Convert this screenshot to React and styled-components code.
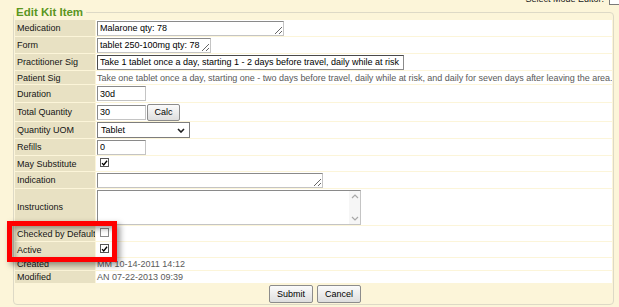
import React from 'react';
import styled, { createGlobalStyle } from 'styled-components';

const GlobalStyle = createGlobalStyle`
  html, body {
    margin: 0;
    padding: 0;
    background: #fcf5d9;
  }
  body {
    width: 619px;
    height: 307px;
    overflow: hidden;
    font-family: "Liberation Sans", Arial, sans-serif;
    font-size: 9px;
    color: #1c1c1c;
  }
`;

const Page = styled.div`
  position: relative;
  width: 619px;
  height: 307px;
`;

const TopBar = styled.div`
  display: flex;
  justify-content: flex-end;
  align-items: flex-end;
  gap: 5px;
  height: 5px;
  margin-right: -30px;
`;

const TopLabel = styled.span`
  line-height: 10px;
  margin-bottom: 1px;
  color: #222;
`;

const TopSelect = styled.div`
  width: 40px;
  height: 14px;
  border: 1px solid #7a7a7a;
  background: #fff;
  box-sizing: border-box;
`;

const Fieldset = styled.fieldset`
  margin: 0 0 0 13px;
  padding: 0;
  width: 601px;
  min-width: 0;
  box-sizing: border-box;
  border: 1px solid #ddd9c6;
  border-radius: 4px;
`;

const Legend = styled.legend`
  padding: 0 3px 0 2px;
  margin-left: 0;
  font-size: 11.5px;
  line-height: 14px;
  font-weight: bold;
  color: #5b961f;
`;

const Table = styled.table`
  width: 599px;
  table-layout: fixed;
  border-collapse: separate;
  border-spacing: 1px;
  margin: 0;
`;

const Tr = styled.tr`
  height: ${p => p.$h}px;
`;

const LabelCell = styled.td`
  width: 80px;
  box-sizing: border-box;
  padding: 0 0 0 2px;
  background: #e8e1c3;
  color: #141414;
  white-space: nowrap;
  overflow: hidden;
  vertical-align: middle;
  line-height: 10px;
`;

const ValueCell = styled.td`
  padding: 0 0 0 1px;
  background: #fff;
  vertical-align: middle;
  line-height: 10px;
  white-space: nowrap;
  overflow: hidden;
  color: ${p => (p.$muted ? '#5a5a5a' : '#2a2a2a')};
`;

const Note = styled.span`
  letter-spacing: -0.03px;
`;

const ButtonCell = styled.td`
  padding: 1px 0 0;
  text-align: center;
  vertical-align: top;
`;

const Field = styled.div`
  display: flex;
  align-items: center;
  gap: 1px;
`;

const TextBox = styled.input`
  box-sizing: border-box;
  width: ${p => p.$w}px;
  height: 15px;
  margin: 0;
  padding: 0 2px;
  font-family: inherit;
  font-size: 9px;
  color: #000;
  background: #fff;
  border: 1px solid;
  border-color: ${p => (p.$dark ? '#4a4a4a #8a8a8a #8a8a8a #4a4a4a' : '#8a8a8a #c4c4c4 #c4c4c4 #8a8a8a')};
  outline: none;
`;

const TextArea = styled.textarea`
  display: block;
  box-sizing: border-box;
  width: ${p => p.$w}px;
  height: ${p => p.$h}px;
  margin: 0;
  padding: 0 2px;
  font-family: inherit;
  font-size: 9px;
  line-height: 13px;
  color: #000;
  background: #fff;
  border: 1px solid;
  border-color: #8a8a8a #c4c4c4 #c4c4c4 #8a8a8a;
  overflow: hidden;
  outline: none;
  resize: ${p => (p.$fixed ? 'none' : 'both')};
`;

const ScrollArea = styled.div`
  position: relative;
  width: ${p => p.$w}px;
`;

const ScrollTrack = styled.div`
  position: absolute;
  top: 1px;
  right: 1px;
  bottom: 1px;
  width: 11px;
  display: flex;
  flex-direction: column;
  justify-content: space-between;
  align-items: center;
  padding: 3px 0;
  box-sizing: border-box;
  background: #f6f6f6;
`;

const SelectBox = styled.div`
  box-sizing: border-box;
  width: 93px;
  height: 16px;
  display: flex;
  align-items: center;
  justify-content: space-between;
  padding: 0 4px 0 3px;
  background: #fff;
  border: 1px solid #7d7d7d;
  color: #000;
`;

const Button = styled.button`
  box-sizing: border-box;
  height: ${p => p.$h || 18}px;
  min-width: ${p => p.$w}px;
  margin: 0;
  padding: 0 6px;
  font-family: inherit;
  font-size: 9px;
  color: #000;
  background: linear-gradient(#fbfbfb, #dedede);
  border: 1px solid #8c8c8c;
  border-radius: 2px;
`;

const ButtonGroup = styled.div`
  display: inline-flex;
  gap: 4px;
  margin-left: 3px;
`;

const Box = styled.span`
  display: inline-flex;
  align-items: center;
  justify-content: center;
  width: 9px;
  height: 9px;
  margin-left: 3px;
  box-sizing: border-box;
  background: #fff;
  border: 1px solid ${p => (p.$checked ? '#555' : '#8a8a8a')};
`;

const Highlight = styled.div`
  position: absolute;
  left: 7px;
  top: 221px;
  width: 110px;
  height: 41px;
  box-sizing: border-box;
  border: 5px solid #ff0000;
  box-shadow: 3px 3px 6px rgba(0, 0, 0, 0.4), inset 3px 3px 5px rgba(0, 0, 0, 0.35);
  pointer-events: none;
`;

const Check = ({ checked }) => (
  <Box $checked={checked}>
    {checked && (
      <svg width="8" height="8" viewBox="0 0 8 8">
        <path d="M1.2 4.2 L3.1 6.3 L6.9 1.4" fill="none" stroke="#000" strokeWidth="1.5" />
      </svg>
    )}
  </Box>
);

const Chevron = ({ up, color = '#1e1e1e', w = 8, sw = 1.6 }) => (
  <svg width={w} height="5" viewBox="0 0 8 5">
    <path d={up ? 'M1 4 L4 1 L7 4' : 'M1 1 L4 4 L7 1'} fill="none" stroke={color} strokeWidth={sw} />
  </svg>
);

const rows = [
  { label: 'Medication', h: 16, field: <TextArea $w={187} $h={15} defaultValue="Malarone qty: 78" /> },
  { label: 'Form', h: 16, field: <TextArea $w={114} $h={15} defaultValue="tablet 250-100mg qty: 78" /> },
  {
    label: 'Practitioner Sig',
    h: 16,
    field: <TextBox $w={307} $dark defaultValue="Take 1 tablet once a day, starting 1 - 2 days before travel, daily while at risk" />,
  },
  {
    label: 'Patient Sig',
    h: 13,
    muted: true,
    field: (
      <Note>
        Take one tablet once a day, starting one - two days before travel, daily while at risk, and daily for seven days after leaving the area.
      </Note>
    ),
  },
  { label: 'Duration', h: 17, field: <TextBox $w={49} defaultValue="30d" /> },
  {
    label: 'Total Quantity',
    h: 18,
    field: (
      <Field>
        <TextBox $w={49} defaultValue="30" />
        <Button type="button" $w={33} $h={17}>Calc</Button>
      </Field>
    ),
  },
  {
    label: 'Quantity UOM',
    h: 16,
    field: (
      <SelectBox>
        <span>Tablet</span>
        <Chevron />
      </SelectBox>
    ),
  },
  { label: 'Refills', h: 16, field: <TextBox $w={49} defaultValue="0" /> },
  { label: 'May Substitute', h: 15, field: <Check checked /> },
  { label: 'Indication', h: 16, field: <TextArea $w={226} $h={15} /> },
  {
    label: 'Instructions',
    h: 36,
    field: (
      <ScrollArea $w={264}>
        <TextArea $w={264} $h={35} $fixed />
        <ScrollTrack>
          <Chevron up color="#a8a8a8" sw={1.2} />
          <Chevron color="#a8a8a8" sw={1.2} />
        </ScrollTrack>
      </ScrollArea>
    ),
  },
  { label: 'Checked by Default', h: 15, field: <Check /> },
  { label: 'Active', h: 15, field: <Check checked /> },
  { label: 'Created', h: 12, muted: true, field: 'MM 10-14-2011 14:12' },
  { label: 'Modified', h: 12, muted: true, field: 'AN 07-22-2013 09:39' },
];

export default function App() {
  return (
    <Page>
      <GlobalStyle />
      <TopBar>
        <TopLabel>Select Mode Editor:</TopLabel>
        <TopSelect />
      </TopBar>
      <Fieldset>
        <Legend>Edit Kit Item</Legend>
        <Table>
          <tbody>
            {rows.map(r => (
              <Tr key={r.label} $h={r.h}>
                <LabelCell>{r.label}</LabelCell>
                <ValueCell $muted={r.muted}>{r.field}</ValueCell>
              </Tr>
            ))}
            <Tr $h={19}>
              <ButtonCell colSpan={2}>
                <ButtonGroup>
                  <Button type="button" $w={44}>Submit</Button>
                  <Button type="button" $w={44}>Cancel</Button>
                </ButtonGroup>
              </ButtonCell>
            </Tr>
          </tbody>
        </Table>
      </Fieldset>
      <Highlight />
    </Page>
  );
}
